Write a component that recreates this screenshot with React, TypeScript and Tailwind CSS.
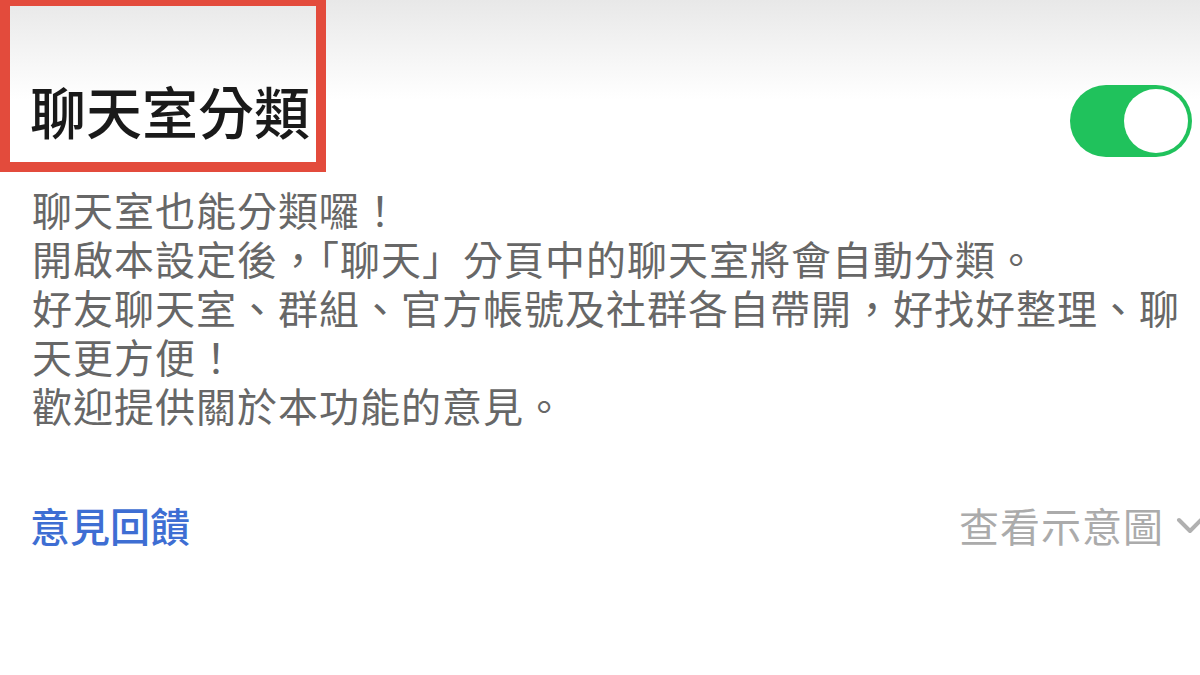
import { useState } from "react";

const bodyLines = [
  "聊天室也能分類囉！",
  "開啟本設定後，「聊天」分頁中的聊天室將會自動分類。",
  "好友聊天室、群組、官方帳號及社群各自帶開，好找好整理、聊",
  "天更方便！",
  "歡迎提供關於本功能的意見。",
];

export default function App() {
  const [enabled, setEnabled] = useState(true);

  return (
    <div className="h-[675px] w-[1200px] overflow-hidden bg-[linear-gradient(to_bottom,#e8e8e8_0px,#f5f5f5_55px,#ffffff_100px)] font-['Noto_Sans_CJK_TC','Noto_Sans_CJK_SC',sans-serif]">
      {/* 見出し + トグル */}
      <div className="flex h-[172px] items-start justify-between">
        <div className="h-[172px] w-[326px] border-[10px] border-t-[6px] border-[#e34b3c] pl-[20px] pt-[70px]">
          <h1 className="text-[56px] font-medium leading-[67px] text-[#1a1a1a]">
            聊天室分類
          </h1>
        </div>
        <button
          type="button"
          onClick={() => setEnabled((v) => !v)}
          className={`mr-[8px] mt-[85px] flex h-[72px] w-[122px] items-center rounded-full p-[4px] ${
            enabled ? "justify-end bg-[#20c25c]" : "justify-start bg-[#e5e5e5]"
          }`}
        >
          <span className="block h-[64px] w-[64px] rounded-full bg-white" />
        </button>
      </div>

      {/* 説明 */}
      <div className="mt-[13px] flex flex-col pl-[32px] text-[40px] leading-[49px] tracking-[1px] text-[#676767]">
        {bodyLines.map((line) => (
          <p key={line} className="whitespace-nowrap">
            {line}
          </p>
        ))}
      </div>

      {/* フッター */}
      <div className="mt-[71px] flex items-center justify-between pl-[30px]">
        <span className="text-[40px] font-medium leading-[49px] text-[#3e6ed3]">
          意見回饋
        </span>
        <span className="flex items-center gap-[12px] text-[40px] leading-[49px] tracking-[1px] text-[#ababab]">
          查看示意圖
          <svg
            width="28"
            height="20"
            viewBox="0 0 28 20"
            fill="none"
            stroke="#b0b0b0"
            strokeWidth="4"
            strokeLinecap="round"
            strokeLinejoin="round"
            className="-mr-[4px]"
          >
            <path d="M3 4 L14 15 L25 4" />
          </svg>
        </span>
      </div>
    </div>
  );
}
